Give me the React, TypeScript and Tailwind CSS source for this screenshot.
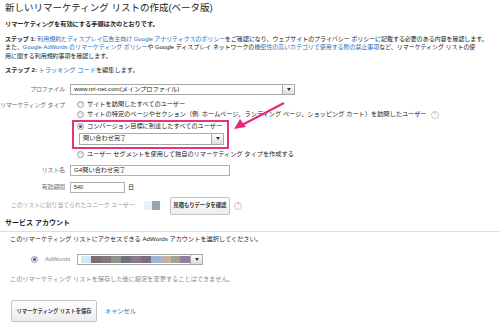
import React from "react";

const font = { fontFamily: '"Liberation Sans", "Noto Sans CJK JP", sans-serif' };

function Radio({ checked = false }: { checked?: boolean }) {
  return (
    <span className="mr-[3px] inline-grid h-[7px] w-[7px] shrink-0 place-items-center rounded-full border border-[#9a9a9a] bg-gradient-to-b from-[#e4e4e4] to-white">
      {checked ? <span className="h-[3px] w-[3px] rounded-full bg-[#2a5fa8]" /> : null}
    </span>
  );
}

function Help() {
  return <span className="ml-[4px] inline-grid h-[8px] w-[8px] place-items-center rounded-full border border-[#c9c9c9] text-[5px] leading-none text-[#c0c0c0]">?</span>;
}

function Arrow() {
  return <span className="grid h-full w-[12px] place-items-center border-l border-[#a8a8a8] bg-gradient-to-b from-white to-[#dcdcdc]"><span className="h-0 w-0 border-x-[2.5px] border-t-[3px] border-x-transparent border-t-[#333]" /></span>;
}

function Row({ label, children, className = "" }: { label: string; children: React.ReactNode; className?: string }) {
  return (
    <div className={`flex items-center ${className}`}>
      <span className="w-[70px] shrink-0 pr-[5px] text-right text-[5.8px] whitespace-nowrap text-[#666]">{label}</span>
      {children}
    </div>
  );
}

const L = ({ children }: { children: React.ReactNode }) => <span className="text-[#2a6ebb]">{children}</span>;

export default function App() {
  const blocks = ["#d6e6f2", "#7d6e6c", "#7f7878", "#8c9490", "#70707e", "#8e7888", "#7c6e80", "#9ab6d2", "#c4b2a2", "#a2a294", "#8e7ea0"];
  return (
    <div style={font} className="relative h-[324px] w-[500px] overflow-hidden bg-white text-[6.2px] leading-[8.5px] text-[#222]">
      <div className="px-[5px] pt-[1px]">
        <h1 className="text-[9.5px] leading-[14px] font-normal text-[#222]">新しいリマーケティング リストの作成(ベータ版)</h1>
        <p className="mt-[5px] font-bold">リマーケティングを有効にする手順は次のとおりです。</p>
        <div className="mt-[6px] whitespace-nowrap text-[6px] tracking-[-0.05px]">
          <div><b>ステップ 1: </b><L>利用規約</L>と<L>ディスプレイ広告主向け Google アナリティクスのポリシー</L>をご確認になり、ウェブサイトのプライバシー ポリシーに記載する必要のある内容を確認します。</div>
          <div>また、<L>Google AdWords のリマーケティング ポリシー</L>や Google ディスプレイ ネットワークの<L>機密性の高いカテゴリで使用する際の禁止事項</L>など、リマーケティング リストの使</div>
          <div>用に関する利用規約事項を確認します。</div>
        </div>
        <p className="mt-[6px]"><b>ステップ 2: </b><L>トラッキング コード</L>を編集します。</p>
      </div>

      <Row label="プロファイル" className="mt-[9px]">
        <div className="flex h-[11px] w-[225px] items-center border border-[#a8a8a8]">
          <span className="flex-1 pl-[3px]">www.nri-net.com(メインプロファイル)</span>
          <Arrow />
        </div>
      </Row>

      <div className="mt-[5px] flex">
        <span className="w-[70px] shrink-0 pr-[5px] text-right text-[5.8px] leading-[10px] whitespace-nowrap text-[#666]">リマーケティング タイプ</span>
        <div className="relative ml-[7px]">
          <div className="flex h-[10px] items-center"><Radio />サイトを訪問したすべてのユーザー</div>
          <div className="flex h-[10px] items-center whitespace-nowrap"><Radio />サイトの特定のページやセクション（例: ホームページ、ランディング ページ、ショッピング カート）を訪問したユーザー<Help /></div>
          <div className="-ml-[5px] w-[157px] border-2 border-[#e7327f] px-[3px] pb-[2px]">
            <div className="flex h-[10px] items-center"><Radio checked />コンバージョン目標に到達したすべてのユーザー</div>
            <div className="mt-[1px] ml-[2px] flex h-[12px] w-[145px] items-center border border-[#a8a8a8]">
              <span className="flex-1 pl-[3px]">問い合わせ完了</span>
              <Arrow />
            </div>
          </div>
          <div className="mt-[1px] flex h-[10px] items-center"><Radio />ユーザー セグメントを使用して独自のリマーケティング タイプを作成する</div>
        </div>
      </div>

      <Row label="リスト名" className="mt-[5px]">
        <div className="flex h-[11px] w-[160px] items-center border border-[#b0b0b0] pl-[3px]">G4問い合わせ完了</div>
      </Row>
      <Row label="有効期間" className="mt-[6px]">
        <div className="flex h-[11px] w-[55px] items-center border border-[#b0b0b0] pl-[3px] text-[5.5px]">540</div>
        <span className="ml-[3px]">日</span>
      </Row>

      <div className="mt-[4px] flex items-center pl-[11px] text-[5.8px] text-[#999]">
        <span>このリストに割り当てられたユニーク ユーザー:</span>
        <span className="ml-[8px] h-[9px] w-[8px] bg-[#eaf0f4]" />
        <span className="h-[9px] w-[8px] bg-[#9aa4ac]" />
        <span className="ml-[10px] grid h-[18px] w-[60px] place-items-center rounded-[2px] border border-[#c4c4c4] bg-gradient-to-b from-white to-[#ececec] text-[5.3px] font-bold text-[#333]">見積もりデータを確認</span>
        <Help />
      </div>

      <div className="mt-[4px] border-b border-[#dedede] px-[5px] pb-[4px] text-[7px] font-bold">サービス アカウント</div>

      <div className="px-[10px]">
        <p className="mt-[3px]">このリマーケティング リストにアクセスできる AdWords アカウントを選択してください。</p>
        <div className="mt-[10px] flex items-center pl-[21px]">
          <Radio checked />
          <span className="ml-[4px] text-[#888]">AdWords</span>
          <div className="ml-[7px] flex h-[11px] w-[126px] items-center border border-[#a8a8a8]">
            <div className="flex h-[7px] flex-1 pl-[3px]">
              {blocks.map((c, i) => <span key={i} className="h-full flex-1" style={{ backgroundColor: c }} />)}
            </div>
            <Arrow />
          </div>
        </div>
        <p className="mt-[10px] text-[#888]">このリマーケティング リストを保存した後に設定を変更することはできません。</p>
        <div className="mt-[17px] flex items-center">
          <span className="ml-[1px] grid h-[22px] w-[86px] place-items-center rounded-[2px] border border-[#c4c4c4] bg-gradient-to-b from-white to-[#ececec] text-[5.3px] font-bold text-[#333]">リマーケティング リストを保存</span>
          <span className="ml-[8px] text-[#2a6ebb]">キャンセル</span>
        </div>
      </div>

      <svg className="absolute top-[100px] left-[232px]" width="56" height="32" viewBox="0 0 56 32">
        <line x1="52" y1="3" x2="10" y2="25" stroke="#e8287a" strokeWidth="2" />
        <polygon points="2,29 8,19 14,27" fill="#e8287a" />
      </svg>
    </div>
  );
}
